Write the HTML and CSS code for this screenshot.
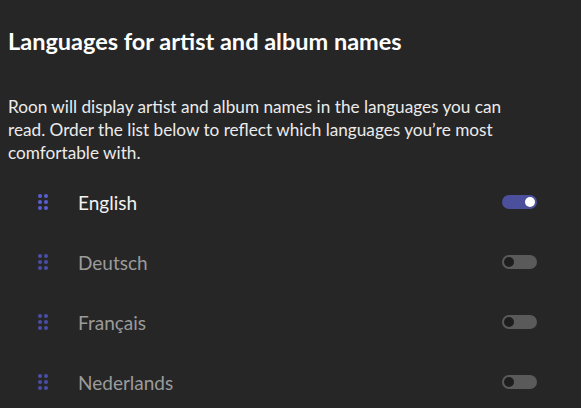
FILE: index.html
```html
<!DOCTYPE html>
<html>
<head>
<meta charset="utf-8">
<link rel="stylesheet" href="styles.css">
</head>
<body>
<div class="page">
  <h1 class="title">Languages for artist and album names</h1>
  <p class="desc">Roon will display artist and album names in the languages you can read. Order the list below to reflect which languages you’re most comfortable with.</p>
  <ul class="list">
    <li class="row active">
      <span class="handle"><i></i><i></i><i></i><i></i><i></i><i></i></span>
      <span class="name">English</span>
      <span class="toggle on"><span class="knob"></span></span>
    </li>
    <li class="row">
      <span class="handle"><i></i><i></i><i></i><i></i><i></i><i></i></span>
      <span class="name">Deutsch</span>
      <span class="toggle"><span class="knob"></span></span>
    </li>
    <li class="row">
      <span class="handle"><i></i><i></i><i></i><i></i><i></i><i></i></span>
      <span class="name">Français</span>
      <span class="toggle"><span class="knob"></span></span>
    </li>
    <li class="row">
      <span class="handle"><i></i><i></i><i></i><i></i><i></i><i></i></span>
      <span class="name">Nederlands</span>
      <span class="toggle"><span class="knob"></span></span>
    </li>
  </ul>
</div>
</body>
</html>
```
FILE: styles.css
```css
html, body {
  margin: 0;
  padding: 0;
  background: #262626;
  font-family: Lato, "Open Sans", sans-serif;
  overflow: hidden;
}
.page {
  padding: 27px 8px 0 8px;
}
.title {
  margin: 0;
  font-size: 23.5px;
  line-height: 28px;
  font-weight: 700;
  color: #ffffff;
}
.desc {
  margin: 40px 45px 0 0;
  font-size: 17.2px;
  line-height: 23px;
  color: #ebebeb;
}
.list {
  list-style: none;
  margin: 8px 0 0 0;
  padding: 0;
}
.row {
  height: 60px;
  display: flex;
  align-items: center;
  padding: 0 36px 0 30px;
}
.handle {
  display: grid;
  grid-template-columns: 4px 4px;
  grid-auto-rows: 4px;
  gap: 2px;
  width: 10px;
  margin-right: 30px;
}
.handle i {
  display: block;
  width: 4px;
  height: 4px;
  border-radius: 50%;
  background: #4a4ea6;
}
.active .handle i {
  background: #5a5fd2;
}
.name {
  flex: 1;
  font-size: 19px;
  color: #9b9b9b;
}
.active .name {
  color: #f2f2f2;
}
.toggle {
  width: 35px;
  height: 14px;
  border-radius: 7px;
  background: #5a5a5a;
  display: flex;
  align-items: center;
  padding: 0 2px;
  box-sizing: border-box;
}
.knob {
  width: 10px;
  height: 10px;
  border-radius: 50%;
  background: #1e1e1e;
}
.toggle.on {
  background: #4c4f9c;
  justify-content: flex-end;
}
.toggle.on .knob {
  background: #ffffff;
}
```
